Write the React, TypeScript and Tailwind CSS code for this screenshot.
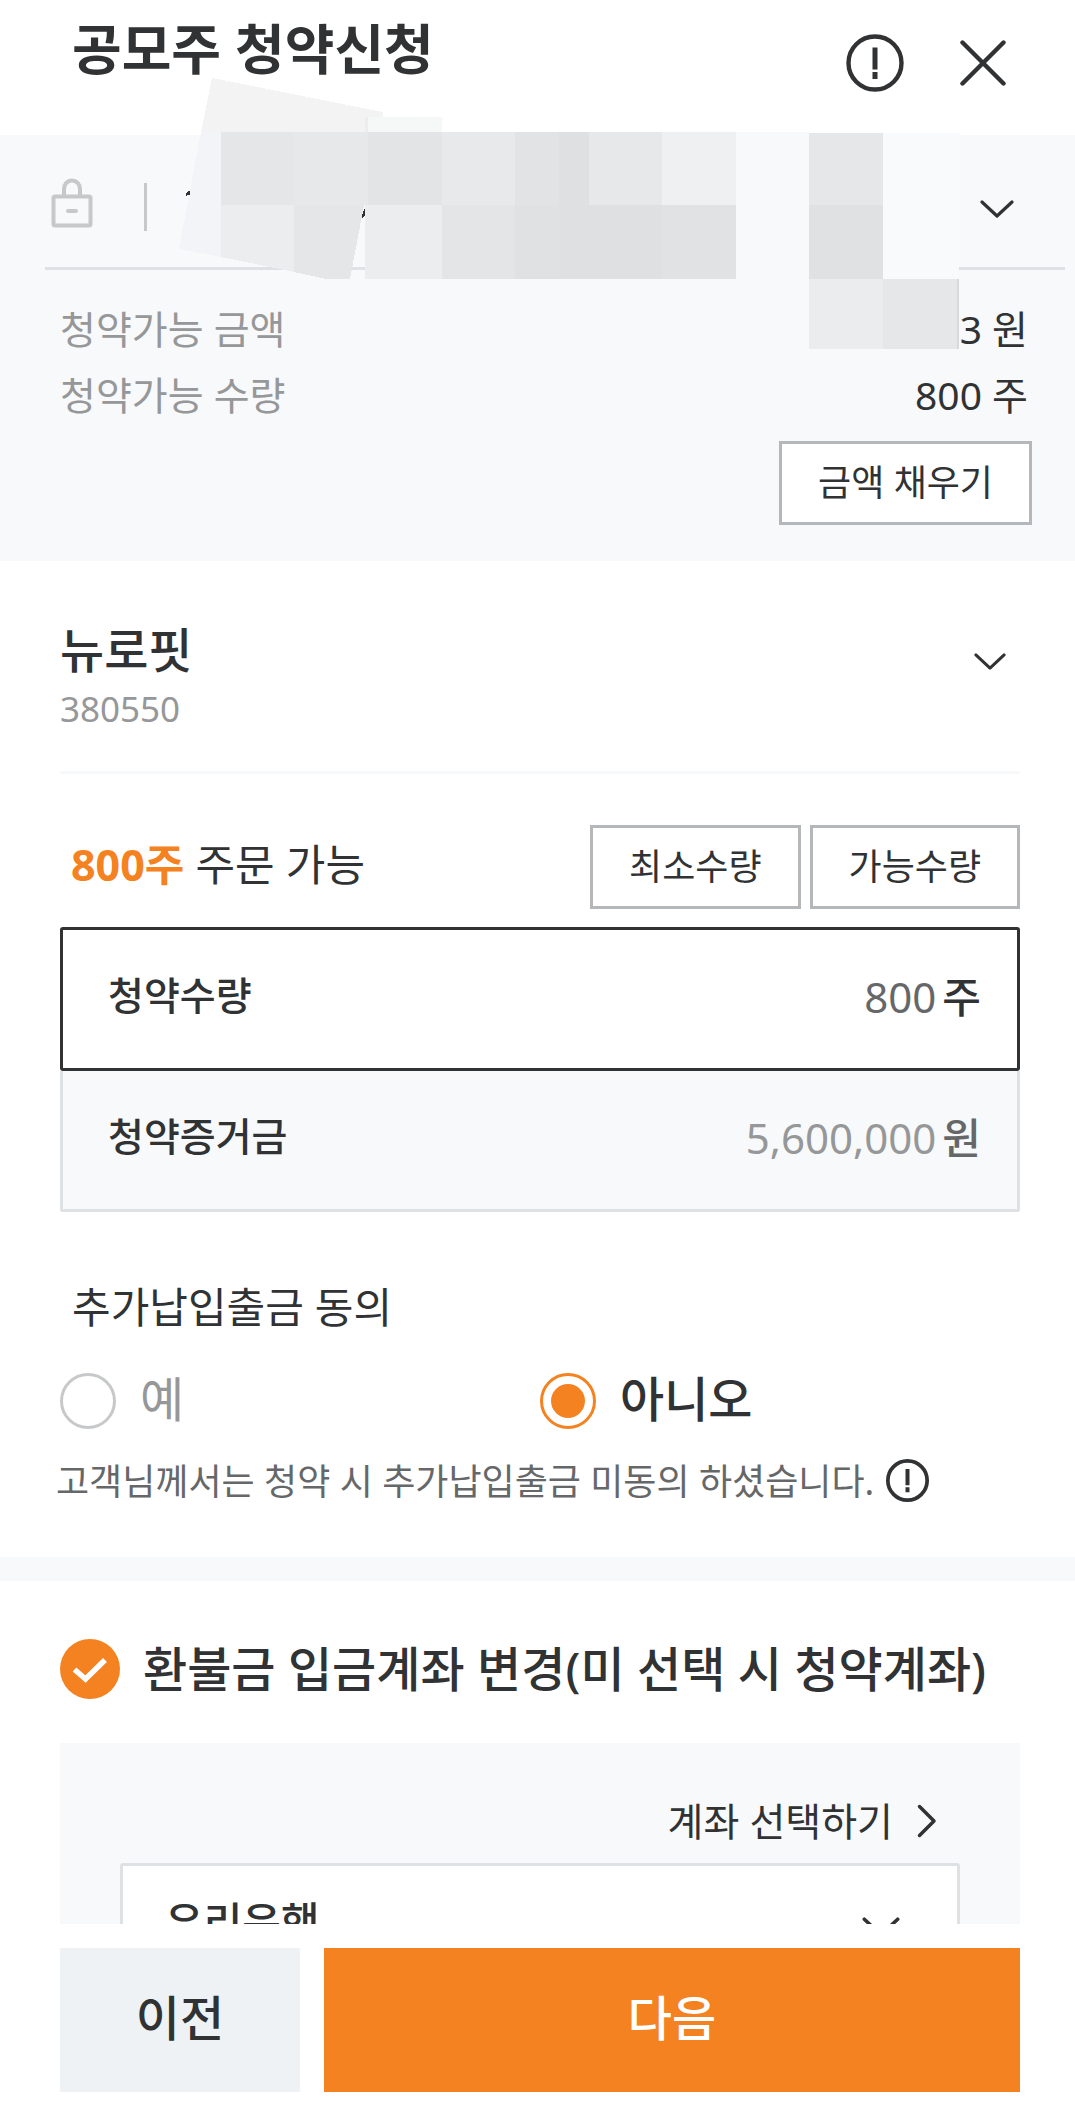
import { useState } from "react";
import type { ReactNode } from "react";

const FONT =
  'font-["Noto_Sans","Noto_Sans_CJK_KR",sans-serif]';

function Chevron({ className }: { className: string }) {
  return (
    <svg aria-hidden="true" viewBox="0 0 34 18" className={className} fill="none" stroke="#303234" strokeWidth="3.2" strokeLinecap="round" strokeLinejoin="round">
      <path d="M2 2 17 16 32 2" />
    </svg>
  );
}

function NoticeIcon({ className, bold = false }: { className: string; bold?: boolean }) {
  return (
    <svg aria-hidden="true" viewBox="0 0 58 58" className={className} fill="none" stroke="#303234">
      <circle cx="29" cy="29" r="26.5" strokeWidth={bold ? 5 : 4.4} />
      <path d="M29 13.5V35.500M29 38v7" strokeWidth={bold ? 5.4 : 5} />
    </svg>
  );
}

function LockIcon() {
  return (
    <svg aria-hidden="true" viewBox="0 0 42 50" className="h-[50px] w-[42px] shrink-0" fill="none" stroke="#c6c8ca" strokeWidth="4">
      <rect x="2.500" y="18.500" width="37" height="29" rx="1.500" />
      <path d="M13 18V11a8 8.500 0 0 1 16 0V18" />
      <path d="M17 33H25" strokeLinecap="round" />
    </svg>
  );
}

const tiles: [number, number, number, number, string][] = [
  [368, 117, 74, 15, "#f6f8f7"],
  [365, 117, 3, 15, "#ededee"],
  [221, 132, 73, 73, "#e5e6e8"],
  [294, 132, 74, 73, "#e7e8ea"],
  [368, 132, 74, 73, "#e3e4e6"],
  [442, 132, 73, 73, "#e8e9eb"],
  [515, 132, 44, 73, "#e2e3e5"],
  [559, 132, 30, 73, "#dfe0e2"],
  [589, 132, 73, 73, "#e7e8ea"],
  [662, 132, 74, 73, "#eff0f2"],
  [736, 132, 73, 147, "#f8f9fb"],
  [809, 133, 74, 72, "#e6e7e9"],
  [883, 133, 76, 146, "#f9fafc"],
  [365, 205, 77, 74, "#ecedef"],
  [442, 205, 73, 74, "#e4e5e7"],
  [515, 205, 44, 74, "#e0e1e3"],
  [559, 205, 103, 74, "#dfe0e2"],
  [662, 205, 74, 74, "#e1e2e4"],
  [809, 205, 74, 74, "#e0e1e3"],
  [809, 279, 74, 70, "#ebecee"],
  [883, 279, 76, 70, "#e6e7e9"],
  [957, 279, 2, 70, "#d8d9db"],
];

/* Mosaic that hides the account holder's details. */
function PrivacyMosaic() {
  return (
    <svg aria-hidden="true" viewBox="0 0 959 349" className="pointer-events-none absolute left-0 top-0 h-[349px] w-[959px]" shapeRendering="crispEdges">
      <path d="M212 78 383 112V117H368V132H201Z" fill="#f3f3f3" />
      <path d="M201 132H221V257L179 249Z" fill="#f2f4f8" />
      <path d="M186 193 189 191H190V195H188L186 196Z" fill="#303234" />
      <path d="M221 205H294V272L221 257Z" fill="#ecedef" />
      <path d="M294 205H364L350 279H326L294 272Z" fill="#e5e6e8" />
      <path d="M365 208V215L362 219V215Z" fill="#303234" />
      {tiles.map(([x, y, width, height, fill]) => (
        <rect key={`${x}-${y}`} x={x} y={y} width={width} height={height} fill={fill} />
      ))}
    </svg>
  );
}

function OutlineButton({ children }: { children: ReactNode }) {
  return (
    <button type="button" className="h-[84px] border-[3px] border-[#b5b8bb] bg-white px-9 text-[36px] leading-[48px] text-[#303234]">
      {children}
    </button>
  );
}

export default function App() {
  const [agree, setAgree] = useState("no");
  const [refund, setRefund] = useState(true);
  const [quantity, setQuantity] = useState("800");

  return (
    <div className={`${FONT} relative flex h-screen flex-col overflow-hidden bg-white text-[#303234]`}>
      <header className="flex h-[135px] shrink-0 items-start justify-between pl-[72px] pr-[69px]">
        <h1 className="pt-[13px] text-[54px] leading-[72px] font-bold">공모주 청약신청</h1>
        <div className="flex items-center gap-14 pt-[34px]">
          <button type="button" aria-label="안내">
            <NoticeIcon className="size-[58px]" />
          </button>
          <button type="button" aria-label="닫기">
            <svg aria-hidden="true" viewBox="0 0 46 46" className="size-[46px]" fill="none" stroke="#303234" strokeWidth="4.400" strokeLinecap="round">
              <path d="M2.500 2.500 43.500 43.500M43.500 2.500 2.500 43.500" />
            </svg>
          </button>
        </div>
      </header>

      <main className="min-h-0 flex-1 overflow-hidden">
        <section className="h-[426px] bg-[#f8f9fb]">
          <div className="ml-[45px] mr-[10px] flex h-[135px] items-center border-b-[3px] border-[#dfe2e4] pl-[6px] pr-[51px] pt-[3px]">
            <LockIcon />
            <span className="ml-[51px] mt-2 h-12 w-[3px] bg-[#c6c8ca]" />
            <button type="button" aria-label="계좌 선택" className="ml-auto mt-3">
              <Chevron className="h-[18px] w-[34px]" />
            </button>
          </div>
          <div className="pl-[60px] pr-[47px] pt-[26px]">
            <dl className="text-[39px] leading-[66px]">
              <div className="flex justify-between">
                <dt className="text-[#969798]">청약가능 금액</dt>
                <dd>3 원</dd>
              </div>
              <div className="flex justify-between">
                <dt className="text-[#969798]">청약가능 수량</dt>
                <dd>800 주</dd>
              </div>
            </dl>
          </div>
          <div className="mr-[43px] mt-[13px] flex justify-end">
            <OutlineButton>금액 채우기</OutlineButton>
          </div>
        </section>

        <section className="pl-[60px] pr-[55px]">
          <div className="flex h-[213px] items-start justify-between border-b-[3px] border-[#f8f9fb] pr-[14px] pt-[54px]">
            <div>
              <h2 className="text-[48px] leading-[70px] font-medium">뉴로핏</h2>
              <p className="text-[35px] leading-[48px] text-[#969798]">380550</p>
            </div>
            <button type="button" aria-label="종목 선택" className="mt-[38px]">
              <Chevron className="h-[17px] w-8" />
            </button>
          </div>

          <div className="mt-[51px] flex items-center justify-between pl-[11px]">
            <p className="pb-1 text-[43px] leading-[60px]">
              <strong className="font-bold text-[#f58220]">800주</strong> 주문 가능
            </p>
            <div className="flex gap-[9px]">
              <OutlineButton>최소수량</OutlineButton>
              <OutlineButton>가능수량</OutlineButton>
            </div>
          </div>

          <div className="mt-[18px] flex h-36 items-center justify-between rounded-[3px] border-[3px] border-[#303234] bg-white pb-1 pl-[45px] pr-9">
            <label htmlFor="quantity" className="pb-1 text-[39px] leading-[60px] font-medium">청약수량</label>
            <div className="flex min-w-0 items-center gap-[6px] text-[42px] leading-[60px]">
              <input id="quantity" inputMode="numeric" value={quantity} onChange={(e) => setQuantity(e.target.value)} className="w-[400px] min-w-0 bg-transparent text-right text-[#666768] outline-none" />
              <span className="font-medium">주</span>
            </div>
          </div>
          <div className="flex h-[141px] items-center justify-between rounded-b-[3px] border-[3px] border-t-0 border-[#dfe2e4] bg-[#f8f9fb] pb-1 pl-[45px] pr-9">
            <label htmlFor="deposit" className="pb-1 text-[39px] leading-[60px] font-medium">청약증거금</label>
            <div className="flex min-w-0 items-center gap-[6px] text-[42px] leading-[60px]">
              <input id="deposit" readOnly value="5,600,000" className="w-[400px] min-w-0 bg-transparent text-right text-[#969798] outline-none" />
              <span className="font-medium text-[#666768]">원</span>
            </div>
          </div>

          <fieldset className="pt-[65px]">
            <legend className="float-left w-full pl-3 text-[42px] leading-[60px]">추가납입출금 동의</legend>
            <div className="clear-both grid grid-cols-2 pt-8">
              <label className="flex items-center gap-6">
                <input type="radio" name="agree" checked={agree === "yes"} onChange={() => setAgree("yes")} className="size-14 shrink-0 appearance-none rounded-full border-[3px] border-[#c6c8ca] bg-white bg-clip-content p-2 checked:border-[#f58220] checked:bg-[#f58220]" />
                <span className="pb-1 text-[48px] leading-[60px] text-[#969798]">예</span>
              </label>
              <label className="flex items-center gap-6">
                <input type="radio" name="agree" checked={agree === "no"} onChange={() => setAgree("no")} className="size-14 shrink-0 appearance-none rounded-full border-[3px] border-[#c6c8ca] bg-white bg-clip-content p-2 checked:border-[#f58220] checked:bg-[#f58220]" />
                <span className="pb-1 text-[48px] leading-[60px] font-medium">아니오</span>
              </label>
            </div>
          </fieldset>
          <div className="-ml-1 mt-[22px] flex items-center gap-3 text-[36px] leading-[54px] whitespace-nowrap text-[#666768]">
            <p>고객님께서는 청약 시 추가납입출금 미동의 하셨습니다.</p>
            <button type="button" aria-label="동의 안내" className="pb-1">
              <NoticeIcon bold className="size-[43px]" />
            </button>
          </div>
        </section>

        <div className="mt-[48px] h-6 bg-[#f8f9fb]" />

        <section className="pl-[60px] pr-[55px] pt-[58px]">
          <label className="flex items-center gap-[23px]">
            <span className="relative flex size-[60px] shrink-0">
              <input type="checkbox" checked={refund} onChange={(e) => setRefund(e.target.checked)} className="size-[60px] appearance-none rounded-full bg-[#c6c8ca] checked:bg-[#f58220]" />
              <svg aria-hidden="true" viewBox="0 0 60 60" className="pointer-events-none absolute inset-0" fill="none" stroke="#fff" strokeWidth="5.500">
                <path d="M14.500 30.500 25.500 40 45 21" />
              </svg>
            </span>
            <span className="text-[48px] leading-[60px] font-medium whitespace-nowrap">환불금 입금계좌 변경(미 선택 시 청약계좌)</span>
          </label>

          <div className="mt-11 bg-[#f8f9fb] px-[60px] pt-[48px]">
            <div className="flex justify-end pr-[23px]">
              <button type="button" className="flex items-center gap-6 text-[39px] leading-[60px]">
                계좌 선택하기
                <svg aria-hidden="true" viewBox="0 0 20 34" className="h-[34px] w-5" fill="none" stroke="#303234" strokeWidth="3.500" strokeLinecap="round" strokeLinejoin="round">
                  <path d="M2.500 2.500 17 17 2.500 31.500" />
                </svg>
              </button>
            </div>
            <div className="relative mt-3 flex h-36 items-start rounded-[3px] border-[3px] border-[#dfe2e4] bg-white">
              <select aria-label="은행" className="w-full appearance-none bg-transparent pl-[42px] pt-[26px] text-[42px] leading-[60px] font-medium outline-none">
                <option>우리은행</option>
              </select>
              <Chevron className="pointer-events-none absolute right-[57px] top-[51px] h-5 w-[38px]" />
            </div>
          </div>
        </section>
      </main>

      <footer className="flex shrink-0 gap-6 bg-white pb-[9px] pl-[60px] pr-[55px] pt-6 text-[48px] leading-[60px] font-medium">
        <button type="button" className="h-36 w-1/4 bg-[#eef2f5] pb-1">이전</button>
        <button type="button" className="h-36 flex-1 bg-[#f58220] pb-1 text-white">다음</button>
      </footer>

      <PrivacyMosaic />
    </div>
  );
}
